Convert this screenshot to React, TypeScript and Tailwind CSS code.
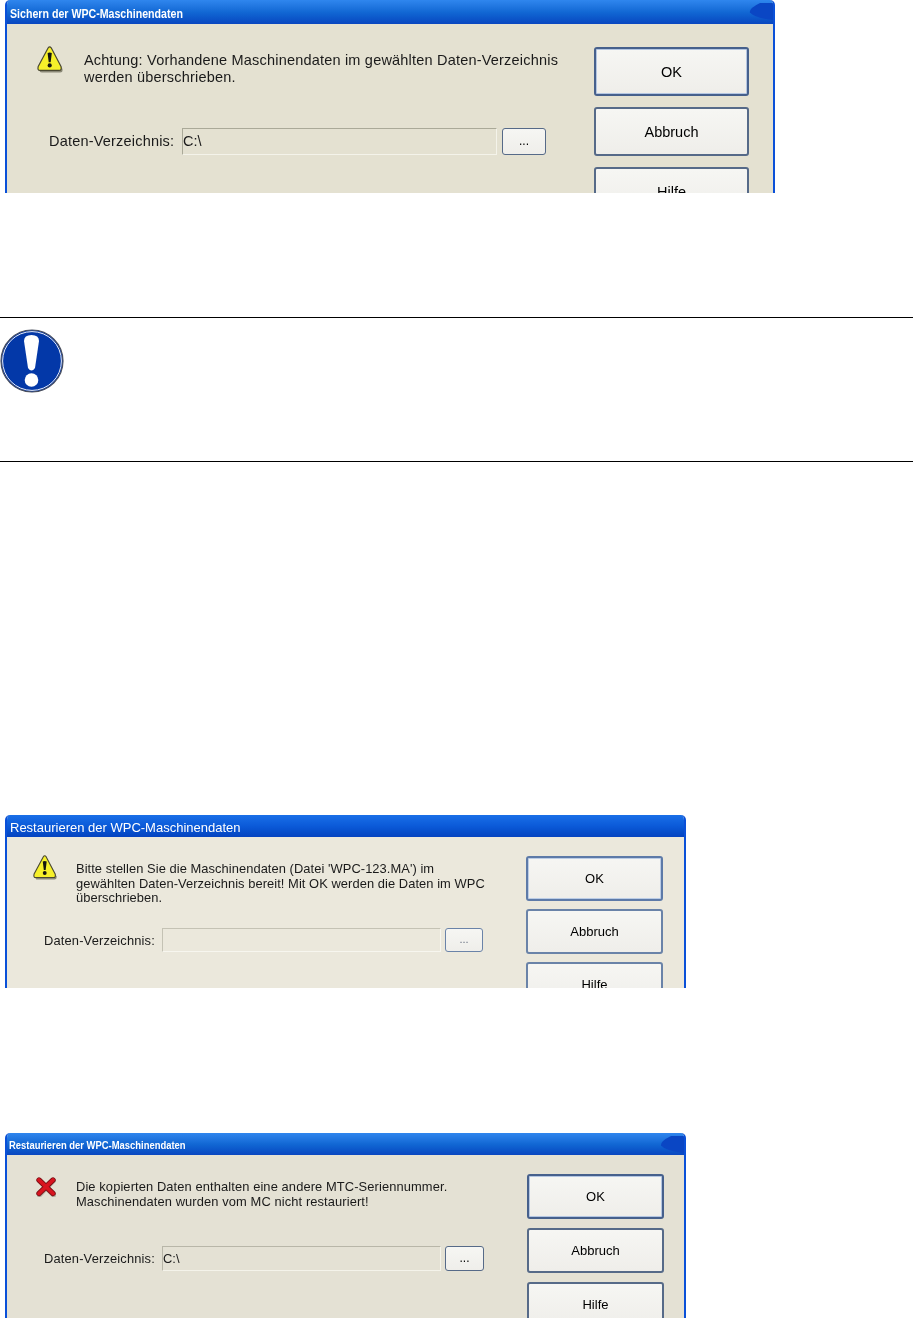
import React from "react";

function WarnIcon({ className }: { className: string }) {
  return (
    <svg viewBox="0 0 26 27" className={className}>
      <path d="M13.5 2 L25.5 23 Q26 26.5 23 26.5 H5 Q2 26.5 3 24 Z" fill="#8a8876" />
      <path d="M11.2 1.8 Q12.6 -0.2 14.2 1.8 L24 20.5 Q25 24.4 22 24.4 H3 Q0.2 24.4 1.2 20.5 Z" fill="#f6f02a" stroke="#4a4832" strokeWidth="1.2" />
      <path d="M10.6 7 Q12.7 5.8 14.8 7 L13.7 16.2 H11.7 Z" fill="#141410" />
      <circle cx="12.7" cy="19.4" r="2.1" fill="#141410" />
    </svg>
  );
}

function ErrorIcon({ className }: { className: string }) {
  return (
    <svg viewBox="0 0 20 20" className={className}>
      <path d="M3.4 3.6 L17.6 18 M17.6 3.6 L3.4 18" stroke="#8d8b7e" strokeWidth="5" strokeLinecap="round" opacity="0.55" />
      <path d="M3 3 L17 16.5 M17 3 L3 16.5" stroke="#7c1016" strokeWidth="5.4" strokeLinecap="round" />
      <path d="M3 3 L17 16.5 M17 3 L3 16.5" stroke="#d8141f" strokeWidth="3.8" strokeLinecap="round" />
    </svg>
  );
}

function Corner() {
  return (
    <svg viewBox="0 0 26 16" preserveAspectRatio="none" className="absolute right-0 top-[3px] h-[17px] w-[24px]">
      <path d="M26 0 H12 Q0 5 1 9 Q6 14 26 16 Z" fill="#0a46c4" />
    </svg>
  );
}

function Btn({ label, className, text }: { label: string; className: string; text: string }) {
  return (
    <div className={`flex shrink-0 items-center justify-center rounded-[3px] bg-gradient-to-b from-[#f6f6f3] to-[#efeeea] pt-[1px] text-black ${className} ${text}`}>
      {label}
    </div>
  );
}

export default function App() {
  const sans = "font-['Liberation_Sans',Arial,sans-serif]";
  const btnBig = "border-2 border-[#566a88]";
  const btnDefault = "border-2 border-[#46608c] shadow-[inset_0_0_0_1px_#b4c6e2]";
  return (
    <div className={`h-[1318px] w-[913px] overflow-hidden bg-white ${sans}`}>
      {/* Dialog 1 */}
      <section className="relative ml-[5px] flex h-[193px] w-[770px] flex-col overflow-hidden rounded-t-[5px] border-x-2 border-[#0a50d8] bg-[#e4e1d1] blur-[0.35px]">
        <div className="relative flex h-[24px] shrink-0 items-center bg-gradient-to-b from-[#2f86ee] via-[#1268d4] to-[#0a46c0] pl-[3px] pt-[3px] text-[12px] font-bold text-white">
          <span className="inline-block origin-left scale-x-[0.885] whitespace-nowrap">Sichern der WPC-Maschinendaten</span>
          <Corner />
        </div>
        <div className="flex min-h-0 flex-1 pl-[30px] pr-[24px] pt-[22px]">
          <div className="flex min-w-0 flex-1 flex-col">
            <div className="flex">
              <WarnIcon className="h-[27px] w-[26px] shrink-0" />
              <p className="ml-[21px] mt-[6px] text-[14.5px] leading-[17px] tracking-[0.2px] text-[#1a1a1a]">
                Achtung: Vorhandene Maschinendaten im gewählten Daten-Verzeichnis
                <br />
                werden überschrieben.
              </p>
            </div>
            <div className="ml-[12px] mt-[42px] flex items-center">
              <span className="w-[133px] shrink-0 text-[14.5px] tracking-[0.2px] text-[#1a1a1a]">Daten-Verzeichnis:</span>
              <div className="flex h-[27px] w-[315px] items-center border border-[#aaa998] border-b-[#f4f3ea] border-r-[#f4f3ea] text-[14.5px] text-[#1a1a1a]">C:\</div>
              <Btn label="..." className="ml-[5px] h-[27px] w-[44px] border-[1.5px] border-[#566a88] pb-[2px]" text="text-[12px]" />
            </div>
          </div>
          <div className="mt-[1px] flex w-[155px] shrink-0 flex-col gap-[11px]">
            <Btn label="OK" className={`h-[49px] pt-[2px] ${btnDefault}`} text="text-[14.5px]" />
            <Btn label="Abbruch" className={`h-[49px] pt-[2px] ${btnBig}`} text="text-[14.5px]" />
            <Btn label="Hilfe" className={`h-[49px] pt-[2px] ${btnBig}`} text="text-[14.5px]" />
          </div>
        </div>
      </section>

      {/* Notice */}
      <div className="mt-[124px] flex h-[145px] items-start border-y border-black pt-[11px]">
        <svg viewBox="0 0 64 64" className="h-[64px] w-[64px]">
          <circle cx="32" cy="32" r="31" fill="#0a3aa8" stroke="#4a4f5c" strokeWidth="1.2" />
          <circle cx="32" cy="32" r="29.4" fill="#0338a8" stroke="#e8ecf4" strokeWidth="1" />
          <path d="M24 12 Q24 6 31.5 6 Q39 6 39 12 L35 39 Q31.5 44 28 39 Z" fill="#fff" />
          <circle cx="31.5" cy="51" r="6.8" fill="#fff" />
        </svg>
      </div>

      {/* Dialog 2 */}
      <section className="ml-[5px] mt-[353px] flex h-[173px] w-[681px] flex-col overflow-hidden rounded-t-[5px] border-x-2 border-[#0a50d8] bg-[#ebe8dc] blur-[0.35px]">
        <div className="flex h-[22px] shrink-0 items-center bg-gradient-to-b from-[#1a6fe8] via-[#0b5ad8] to-[#0543c0] pl-[3px] pt-[3px] text-[13px] text-white">
          Restaurieren der WPC-Maschinendaten
        </div>
        <div className="flex min-h-0 flex-1 pl-[26px] pr-[21px] pt-[18px]">
          <div className="flex min-w-0 flex-1 flex-col">
            <div className="flex">
              <WarnIcon className="h-[25px] w-[24px] shrink-0" />
              <p className="ml-[19px] mt-[7px] text-[12.9px] leading-[14.7px] tracking-[0.06px] text-[#1a1a1a]">
                Bitte stellen Sie die Maschinendaten (Datei 'WPC-123.MA') im
                <br />
                gewählten Daten-Verzeichnis bereit! Mit OK werden die Daten im WPC
                <br />
                überschrieben.
              </p>
            </div>
            <div className="ml-[11px] mt-[22px] flex items-center">
              <span className="w-[118px] shrink-0 pt-[2px] text-[12.9px] tracking-[0.15px] text-[#1a1a1a]">Daten-Verzeichnis:</span>
              <div className="h-[24px] w-[279px] border border-[#c4c2b4] border-b-[#f7f6ef] border-r-[#f7f6ef]" />
              <Btn label="..." className="ml-[4px] h-[24px] w-[38px] border-[1.5px] border-[#6a83a8] pb-[2px]" text="text-[11px] text-gray-500" />
            </div>
          </div>
          <div className="mt-[1px] flex w-[137px] shrink-0 flex-col gap-[8px]">
            <Btn label="OK" className="h-[45px] border-2 border-[#5d7aa8] shadow-[inset_0_0_0_1px_#bccde6]" text="text-[13px]" />
            <Btn label="Abbruch" className="h-[45px] border-2 border-[#6a83a8]" text="text-[13px]" />
            <Btn label="Hilfe" className="h-[45px] border-2 border-[#6a83a8]" text="text-[13px]" />
          </div>
        </div>
      </section>

      {/* Dialog 3 */}
      <section className="relative ml-[5px] mt-[145px] flex h-[185px] w-[681px] flex-col overflow-hidden rounded-t-[5px] border-x-2 border-[#0a50d8] bg-[#e4e1d4] blur-[0.35px]">
        <div className="relative flex h-[22px] shrink-0 items-center bg-gradient-to-b from-[#2f86ee] via-[#1268d4] to-[#0a46c0] pl-[2px] pt-[3px] text-[11.5px] font-bold text-white">
          <span className="inline-block origin-left scale-x-[0.82] whitespace-nowrap">Restaurieren der WPC-Maschinendaten</span>
          <Corner />
        </div>
        <div className="flex min-h-0 flex-1 pl-[29px] pr-[20px] pt-[20px]">
          <div className="flex min-w-0 flex-1 flex-col">
            <div className="flex">
              <ErrorIcon className="mt-[2px] h-[20px] w-[20px] shrink-0" />
              <p className="ml-[20px] mt-[5px] text-[12.9px] leading-[14.7px] tracking-[0.1px] text-[#1a1a1a]">
                Die kopierten Daten enthalten eine andere MTC-Seriennummer.
                <br />
                Maschinendaten wurden vom MC nicht restauriert!
              </p>
            </div>
            <div className="ml-[8px] mt-[37px] flex items-center">
              <span className="w-[118px] shrink-0 text-[12.9px] tracking-[0.15px] text-[#1a1a1a]">Daten-Verzeichnis:</span>
              <div className="flex h-[25px] w-[279px] items-center border border-[#b8b6a8] border-b-[#f4f3ea] border-r-[#f4f3ea] text-[12.9px] text-[#1a1a1a]">C:\</div>
              <Btn label="..." className="ml-[4px] h-[25px] w-[39px] border-[1.5px] border-[#566a88] pb-[2px]" text="text-[12px]" />
            </div>
          </div>
          <div className="-mt-[1px] flex w-[137px] shrink-0 flex-col gap-[9px]">
            <Btn label="OK" className={`h-[45px] ${btnDefault}`} text="text-[13px]" />
            <Btn label="Abbruch" className={`h-[45px] ${btnBig}`} text="text-[13px]" />
            <Btn label="Hilfe" className={`h-[45px] ${btnBig}`} text="text-[13px]" />
          </div>
        </div>
      </section>
    </div>
  );
}
